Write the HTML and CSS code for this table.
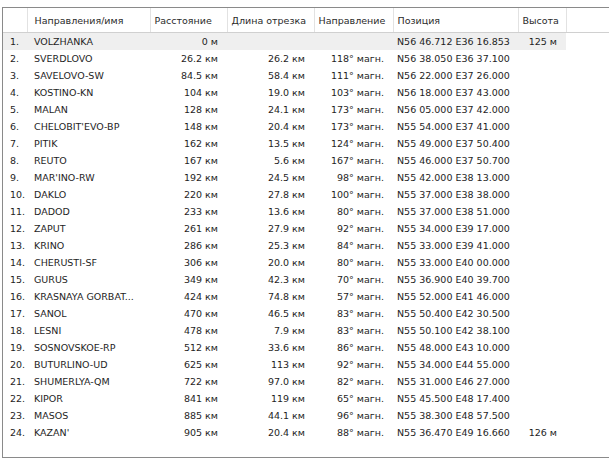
FILE: index.html
```html
<!DOCTYPE html>
<html lang="ru">
<head>
<meta charset="utf-8">
<title>Маршрут</title>
<link rel="stylesheet" href="styles.css">
</head>
<body>
<div class="list">
<table class="grid">
<colgroup>
<col class="c-num"><col class="c-name"><col class="c-dist"><col class="c-leg"><col class="c-dir"><col class="c-pos"><col class="c-alt"><col class="c-fill">
</colgroup>
<thead>
<tr><th></th><th class="pad-name">Направления/имя</th><th>Расстояние</th><th>Длина отрезка</th><th>Направление</th><th>Позиция</th><th>Высота</th><th class="fill"></th></tr>
</thead>
<tbody>
<tr class="sel"><td class="n">1.</td><td class="nm">VOLZHANKA</td><td class="r">0 м</td><td class="r"></td><td class="r"></td><td>N56 46.712 E36 16.853</td><td class="r">125 м</td><td class="fill"></td></tr>
<tr><td class="n">2.</td><td class="nm">SVERDLOVO</td><td class="r">26.2 км</td><td class="r">26.2 км</td><td class="r">118° магн.</td><td>N56 38.050 E36 37.100</td><td class="r"></td><td class="fill"></td></tr>
<tr><td class="n">3.</td><td class="nm">SAVELOVO-SW</td><td class="r">84.5 км</td><td class="r">58.4 км</td><td class="r">111° магн.</td><td>N56 22.000 E37 26.000</td><td class="r"></td><td class="fill"></td></tr>
<tr><td class="n">4.</td><td class="nm">KOSTINO-KN</td><td class="r">104 км</td><td class="r">19.0 км</td><td class="r">103° магн.</td><td>N56 18.000 E37 43.000</td><td class="r"></td><td class="fill"></td></tr>
<tr><td class="n">5.</td><td class="nm">MALAN</td><td class="r">128 км</td><td class="r">24.1 км</td><td class="r">173° магн.</td><td>N56 05.000 E37 42.000</td><td class="r"></td><td class="fill"></td></tr>
<tr><td class="n">6.</td><td class="nm">CHELOBIT'EVO-BP</td><td class="r">148 км</td><td class="r">20.4 км</td><td class="r">173° магн.</td><td>N55 54.000 E37 41.000</td><td class="r"></td><td class="fill"></td></tr>
<tr><td class="n">7.</td><td class="nm">PITIK</td><td class="r">162 км</td><td class="r">13.5 км</td><td class="r">124° магн.</td><td>N55 49.000 E37 50.400</td><td class="r"></td><td class="fill"></td></tr>
<tr><td class="n">8.</td><td class="nm">REUTO</td><td class="r">167 км</td><td class="r">5.6 км</td><td class="r">167° магн.</td><td>N55 46.000 E37 50.700</td><td class="r"></td><td class="fill"></td></tr>
<tr><td class="n">9.</td><td class="nm">MAR'INO-RW</td><td class="r">192 км</td><td class="r">24.5 км</td><td class="r">98° магн.</td><td>N55 42.000 E38 13.000</td><td class="r"></td><td class="fill"></td></tr>
<tr><td class="n">10.</td><td class="nm">DAKLO</td><td class="r">220 км</td><td class="r">27.8 км</td><td class="r">100° магн.</td><td>N55 37.000 E38 38.000</td><td class="r"></td><td class="fill"></td></tr>
<tr><td class="n">11.</td><td class="nm">DADOD</td><td class="r">233 км</td><td class="r">13.6 км</td><td class="r">80° магн.</td><td>N55 37.000 E38 51.000</td><td class="r"></td><td class="fill"></td></tr>
<tr><td class="n">12.</td><td class="nm">ZAPUT</td><td class="r">261 км</td><td class="r">27.9 км</td><td class="r">92° магн.</td><td>N55 34.000 E39 17.000</td><td class="r"></td><td class="fill"></td></tr>
<tr><td class="n">13.</td><td class="nm">KRINO</td><td class="r">286 км</td><td class="r">25.3 км</td><td class="r">84° магн.</td><td>N55 33.000 E39 41.000</td><td class="r"></td><td class="fill"></td></tr>
<tr><td class="n">14.</td><td class="nm">CHERUSTI-SF</td><td class="r">306 км</td><td class="r">20.0 км</td><td class="r">80° магн.</td><td>N55 33.000 E40 00.000</td><td class="r"></td><td class="fill"></td></tr>
<tr><td class="n">15.</td><td class="nm">GURUS</td><td class="r">349 км</td><td class="r">42.3 км</td><td class="r">70° магн.</td><td>N55 36.900 E40 39.700</td><td class="r"></td><td class="fill"></td></tr>
<tr><td class="n">16.</td><td class="nm">KRASNAYA GORBAT...</td><td class="r">424 км</td><td class="r">74.8 км</td><td class="r">57° магн.</td><td>N55 52.000 E41 46.000</td><td class="r"></td><td class="fill"></td></tr>
<tr><td class="n">17.</td><td class="nm">SANOL</td><td class="r">470 км</td><td class="r">46.5 км</td><td class="r">83° магн.</td><td>N55 50.400 E42 30.500</td><td class="r"></td><td class="fill"></td></tr>
<tr><td class="n">18.</td><td class="nm">LESNI</td><td class="r">478 км</td><td class="r">7.9 км</td><td class="r">83° магн.</td><td>N55 50.100 E42 38.100</td><td class="r"></td><td class="fill"></td></tr>
<tr><td class="n">19.</td><td class="nm">SOSNOVSKOE-RP</td><td class="r">512 км</td><td class="r">33.6 км</td><td class="r">86° магн.</td><td>N55 48.000 E43 10.000</td><td class="r"></td><td class="fill"></td></tr>
<tr><td class="n">20.</td><td class="nm">BUTURLINO-UD</td><td class="r">625 км</td><td class="r">113 км</td><td class="r">92° магн.</td><td>N55 34.000 E44 55.000</td><td class="r"></td><td class="fill"></td></tr>
<tr><td class="n">21.</td><td class="nm">SHUMERLYA-QM</td><td class="r">722 км</td><td class="r">97.0 км</td><td class="r">82° магн.</td><td>N55 31.000 E46 27.000</td><td class="r"></td><td class="fill"></td></tr>
<tr><td class="n">22.</td><td class="nm">KIPOR</td><td class="r">841 км</td><td class="r">119 км</td><td class="r">65° магн.</td><td>N55 45.500 E48 17.400</td><td class="r"></td><td class="fill"></td></tr>
<tr><td class="n">23.</td><td class="nm">MASOS</td><td class="r">885 км</td><td class="r">44.1 км</td><td class="r">96° магн.</td><td>N55 38.300 E48 57.500</td><td class="r"></td><td class="fill"></td></tr>
<tr><td class="n">24.</td><td class="nm">KAZAN'</td><td class="r">905 км</td><td class="r">20.4 км</td><td class="r">88° магн.</td><td>N55 36.470 E49 16.660</td><td class="r">126 м</td><td class="fill"></td></tr>
</tbody>
</table>
</div>
</body>
</html>
```

FILE: styles.css
```css
html, body {
  margin: 0;
  padding: 0;
  background: #ffffff;
}

body {
  font-family: "DejaVu Sans", sans-serif;
  font-size: 9.5px;
  color: #1e1e1e;
}

.list {
  margin: 7px 0 0 2px;
  height: 449px;
  border: 1px solid #8a8a8a;
  border-right: none;
  overflow: hidden;
  background: #ffffff;
}

.grid {
  border-collapse: collapse;
  table-layout: fixed;
  width: 100%;
}

.c-num { width: 24px; }
.c-name { width: 123px; }
.c-dist { width: 77px; }
.c-leg { width: 87px; }
.c-dir { width: 79px; }
.c-pos { width: 125px; }
.c-alt { width: 48px; }
.c-fill { width: auto; }

.grid th {
  height: 24px;
  padding: 0 0 0 4px;
  text-align: left;
  font-weight: normal;
  color: #2a2a2a;
  white-space: nowrap;
  overflow: hidden;
  border-right: 1px solid #e2e2e2;
  border-bottom: 1px solid #d0d0d0;
  background: #ffffff;
}

.grid th.pad-name { padding-left: 7px; }
.grid th.fill { border-right: none; }

.grid td {
  height: 17px;
  padding: 0 0 0 4px;
  white-space: nowrap;
  overflow: hidden;
}

.grid td.n { padding-left: 7px; }
.grid td.nm { padding-left: 7px; }
.grid td.r { text-align: right; padding: 0 9px 0 0; }

.grid tr.sel td { background: #efefef; }
.grid tr.sel td.fill { background: transparent; }
```
